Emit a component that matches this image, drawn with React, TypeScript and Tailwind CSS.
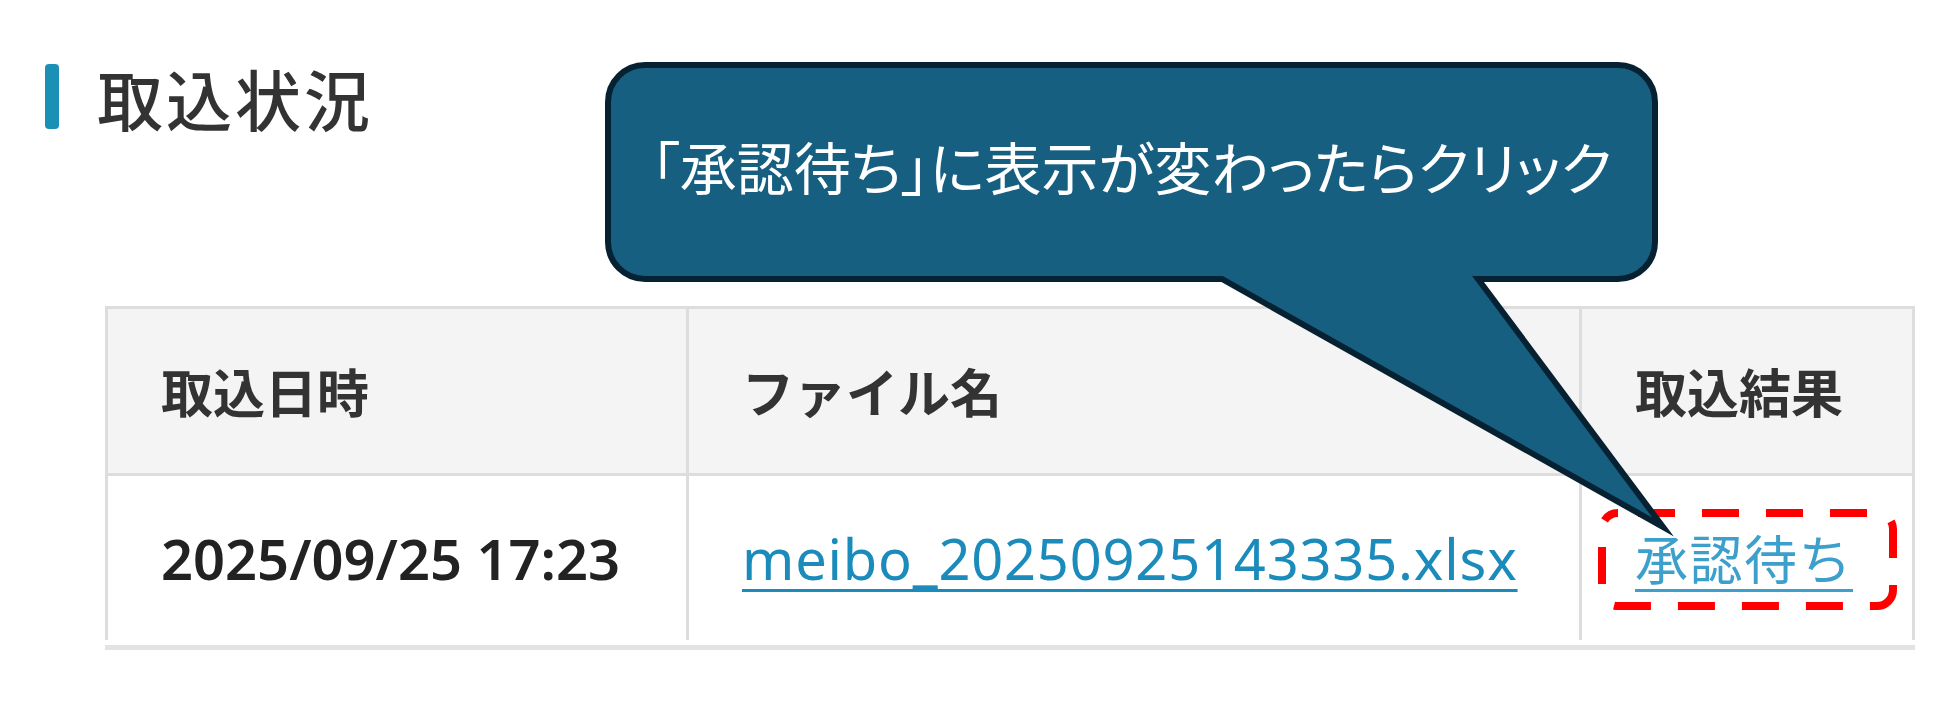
const jp = "font-['Noto_Sans_CJK_JP',sans-serif]";
const latin = "font-['Noto_Sans','Noto_Sans_CJK_JP',sans-serif]";

function Heading() {
  return (
    <div className="flex items-center h-[65px] mt-[64px] ml-[45px] gap-[38px]">
      <span className="w-[14px] h-[65px] rounded-[4px] bg-[#1a90b6]" />
      <h2 className={`${jp} font-medium text-[66px] leading-none text-[#333333] tracking-[3px]`}>取込状況</h2>
    </div>
  );
}

function ImportTable() {
  const head = `${jp} font-bold text-[52px] text-[#333333] bg-[#f4f4f4] h-[167px] border-b-[3px] border-[#dddddd] flex items-center pl-[53px]`;
  const cell = "h-[164px] flex items-center pl-[53px]";
  const link = "text-[#1a8bbb] underline decoration-[3px] underline-offset-[9px]";
  return (
    <div className="ml-[105px] mt-[177px] w-[1810px]">
      <div className="grid grid-cols-[581px_893px_330px] border-t-[3px] border-x-[3px] border-[#dddddd]">
        <div className={`${head} border-r-[3px]`}>取込日時</div>
        <div className={`${head} border-r-[3px]`}>ファイル名</div>
        <div className={head}>取込結果</div>
        <div className={`${cell} ${latin} font-semibold text-[56px] text-[#222222] border-r-[3px] border-[#dddddd]`}>
          2025/09/25 17:23
        </div>
        <div className={`${cell} ${latin} text-[56px] tracking-[0.8px] border-r-[3px] border-[#dddddd]`}>
          <a className={link}>meibo_20250925143335.xlsx</a>
        </div>
        <div className={`${cell} ${jp} text-[53px] tracking-[1.5px]`}>
          <a className={`${link} text-[#3c9fcc]`}>承認待ち</a>
        </div>
      </div>
      <div className="mt-[5px] h-[5px] bg-[#e3e3e3]" />
    </div>
  );
}

function Callout() {
  return (
    <>
      <svg className="absolute left-0 top-0 pointer-events-none" width="1952" height="725" viewBox="0 0 1952 725">
        <rect x="1602" y="513" width="291" height="93" rx="16" fill="none" stroke="#ff0000" strokeWidth="8" strokeDasharray="37 27" strokeDashoffset="-20" />
        <path
          d="M645 65 H1618 A37 37 0 0 1 1655 102 V242 A37 37 0 0 1 1618 279 H1478 L1663 527 L1222 279 H645 A37 37 0 0 1 608 242 V102 A37 37 0 0 1 645 65 Z"
          fill="#175f80"
          stroke="#062232"
          strokeWidth="6"
          strokeLinejoin="miter"
          strokeMiterlimit="30"
        />
      </svg>
      <div className="absolute left-[605px] top-[62px] w-[1053px] h-[220px] flex items-center justify-center pb-[14px]">
        <p className={`${jp} text-[57px] leading-none text-white [font-feature-settings:'palt']`}>
          「承認待ち」に表示が変わったらクリック
        </p>
      </div>
    </>
  );
}

export default function App() {
  return (
    <div className="relative w-[1952px] h-[725px] bg-white overflow-hidden">
      <Heading />
      <ImportTable />
      <Callout />
    </div>
  );
}
